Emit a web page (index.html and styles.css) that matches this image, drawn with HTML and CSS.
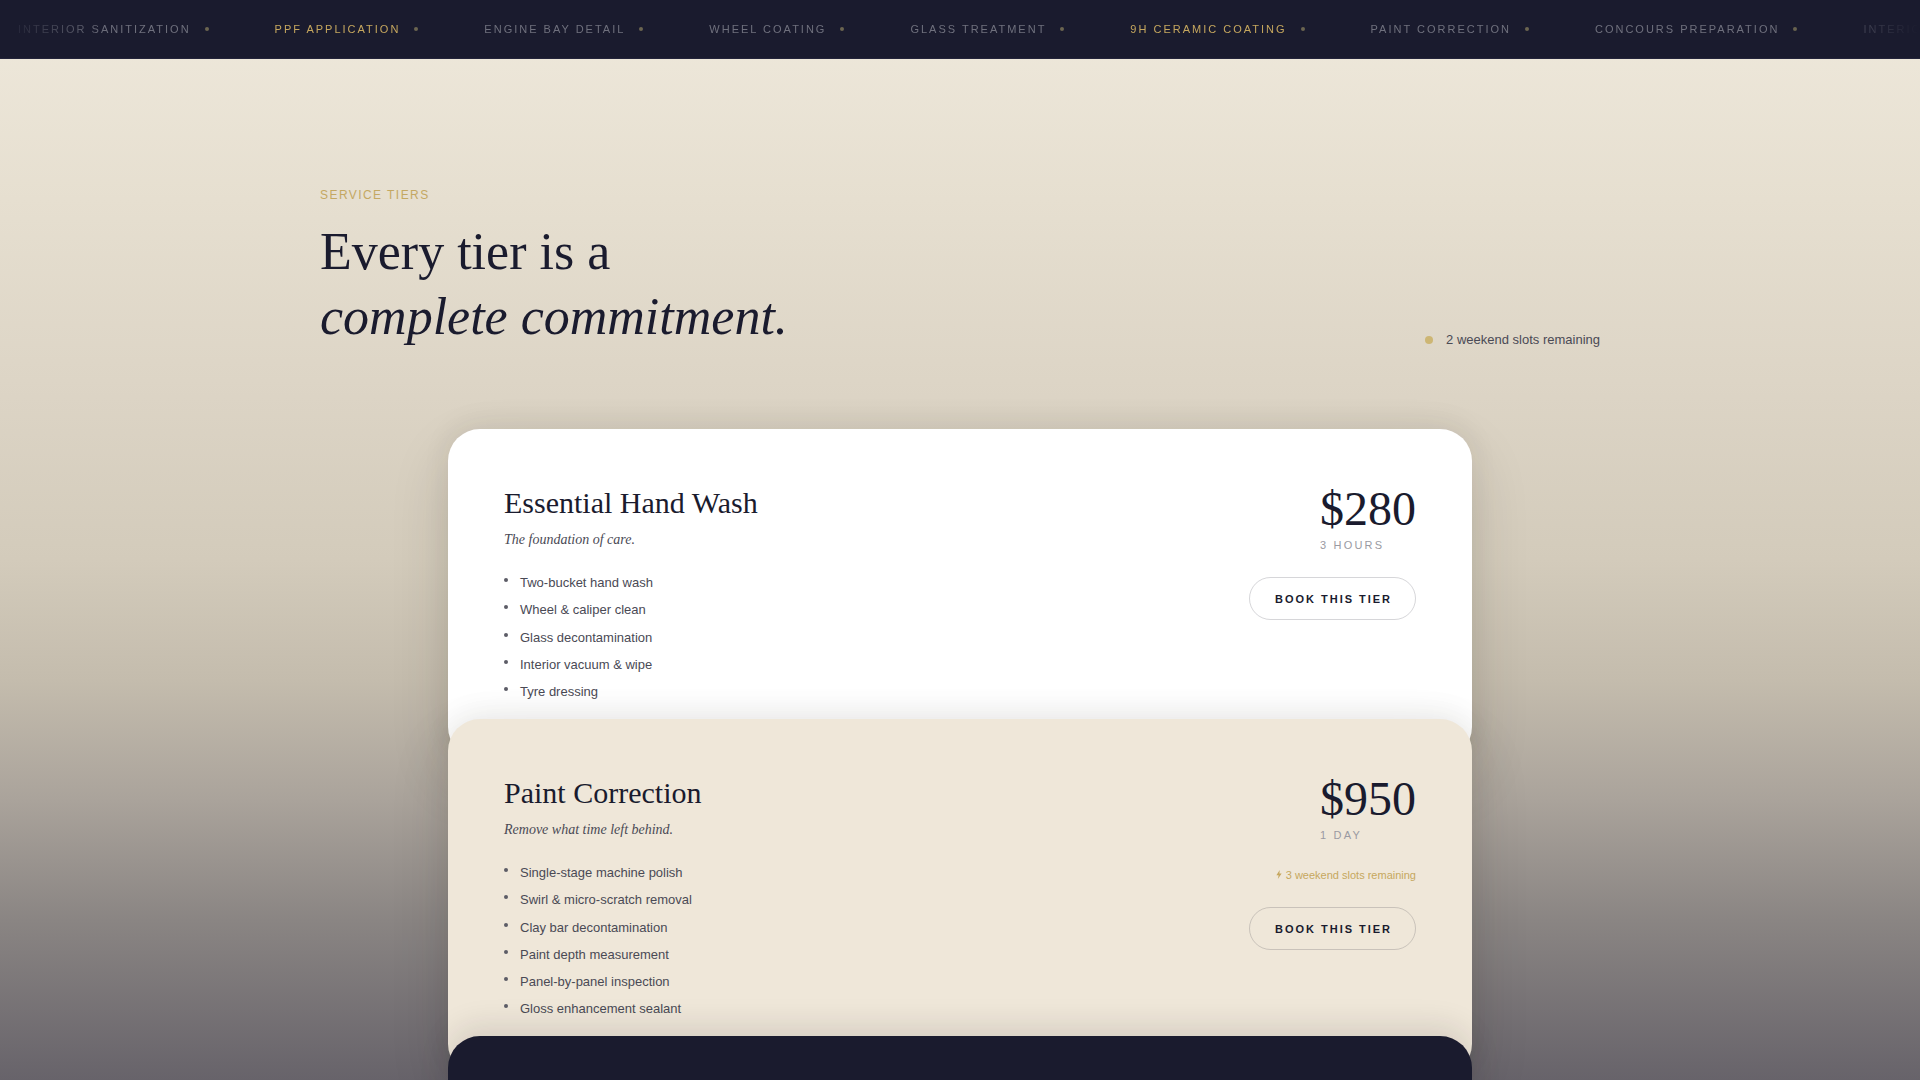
FILE: index.html
```html
<!DOCTYPE html>
<html lang="en">
<head>
<meta charset="utf-8">
<title>Service Tiers</title>
<link rel="stylesheet" href="styles.css">
</head>
<body>
<div class="ticker">
  <div class="ticker-viewport">
    <div class="ticker-track">
      <span class="tick">INTERIOR SANITIZATION</span><span class="tick-dot"></span>
      <span class="tick gold">PPF APPLICATION</span><span class="tick-dot"></span>
      <span class="tick">ENGINE BAY DETAIL</span><span class="tick-dot"></span>
      <span class="tick">WHEEL COATING</span><span class="tick-dot"></span>
      <span class="tick">GLASS TREATMENT</span><span class="tick-dot"></span>
      <span class="tick gold">9H CERAMIC COATING</span><span class="tick-dot"></span>
      <span class="tick">PAINT CORRECTION</span><span class="tick-dot"></span>
      <span class="tick">CONCOURS PREPARATION</span><span class="tick-dot"></span>
      <span class="tick">INTERIOR SANITIZATION</span>
    </div>
  </div>
</div>

<main class="tiers">
  <div class="tiers-head">
    <div class="head-left">
      <div class="eyebrow">SERVICE TIERS</div>
      <h1 class="headline">Every tier is a<br><em>complete commitment.</em></h1>
    </div>
    <div class="slots-badge"><span class="badge-dot"></span>2 weekend slots remaining</div>
  </div>

  <div class="cards">
    <section class="card card-white">
      <div class="card-left">
        <h2 class="card-title">Essential Hand Wash</h2>
        <p class="card-tag">The foundation of care.</p>
        <ul class="features">
          <li>Two-bucket hand wash</li>
          <li>Wheel &amp; caliper clean</li>
          <li>Glass decontamination</li>
          <li>Interior vacuum &amp; wipe</li>
          <li>Tyre dressing</li>
        </ul>
      </div>
      <div class="card-right">
        <div class="price-block">
          <div class="price">$280</div>
          <div class="duration">3 HOURS</div>
        </div>
        <button class="book-btn">BOOK THIS TIER</button>
      </div>
    </section>

    <section class="card card-cream">
      <div class="card-left">
        <h2 class="card-title">Paint Correction</h2>
        <p class="card-tag">Remove what time left behind.</p>
        <ul class="features">
          <li>Single-stage machine polish</li>
          <li>Swirl &amp; micro-scratch removal</li>
          <li>Clay bar decontamination</li>
          <li>Paint depth measurement</li>
          <li>Panel-by-panel inspection</li>
          <li>Gloss enhancement sealant</li>
        </ul>
      </div>
      <div class="card-right">
        <div class="price-block">
          <div class="price">$950</div>
          <div class="duration">1 DAY</div>
        </div>
        <div class="card-slots"><svg class="bolt" viewBox="0 0 8 12" width="6" height="9"><path d="M5 0 L0.5 7 H3.5 L2.5 12 L7.5 4.5 H4.5 Z" fill="#c6a75e"/></svg>3 weekend slots remaining</div>
        <button class="book-btn">BOOK THIS TIER</button>
      </div>
    </section>

    <section class="card card-dark"></section>
  </div>
</main>
</body>
</html>
```

FILE: styles.css
```css
* { box-sizing: border-box; }

html, body {
  margin: 0;
  padding: 0;
}

body {
  height: 100vh;
  overflow: hidden;
  font-family: "Liberation Sans", Arial, sans-serif;
  color: #1a1b2e;
  background: linear-gradient(180deg,
    #efe9dc 0px,
    #e6dfd0 200px,
    #ddd5c6 380px,
    #d3cbbb 560px,
    #c4bcad 680px,
    #aaa39b 800px,
    #8a8583 920px,
    #67636a 1080px);
}

/* ticker */
.ticker {
  height: 59px;
  background: #1a1b2e;
  border-bottom: 1px solid #23243a;
  overflow: hidden;
}

.ticker-viewport {
  height: 100%;
  display: flex;
  align-items: center;
  overflow: hidden;
  -webkit-mask-image: linear-gradient(90deg, transparent 0px, #000 110px, #000 1790px, transparent 1920px);
  mask-image: linear-gradient(90deg, transparent 0px, #000 110px, #000 1790px, transparent 1920px);
}

.ticker-track {
  display: flex;
  align-items: center;
  white-space: nowrap;
  padding-left: 18px;
}

.tick {
  font-size: 11px;
  letter-spacing: 2px;
  color: #6f707d;
  font-weight: 400;
}

.tick.gold {
  color: #c6a75e;
}

.tick-dot {
  width: 4px;
  height: 4px;
  border-radius: 50%;
  background: #6b6550;
  margin: 0 66px 0 14px;
  flex: none;
}

/* section */
.tiers {
  width: 1280px;
  margin: 0 auto;
  padding-top: 128px;
}

.tiers-head {
  display: flex;
  justify-content: space-between;
  align-items: flex-end;
}

.eyebrow {
  font-size: 12px;
  line-height: 16px;
  letter-spacing: 0.12em;
  color: #c4a862;
  margin-bottom: 16px;
}

.headline {
  margin: 0;
  font-family: "Liberation Serif", "Times New Roman", serif;
  font-weight: 400;
  font-size: 52px;
  line-height: 65px;
  color: #1a1b2e;
}

.headline em {
  font-style: italic;
}

.slots-badge {
  display: flex;
  align-items: center;
  gap: 13px;
  font-size: 13px;
  line-height: 20px;
  color: #4a4a55;
  margin-bottom: -1px;
}

.badge-dot {
  width: 8px;
  height: 8px;
  border-radius: 50%;
  background: #cdb674;
}

/* cards */
.cards {
  width: 1024px;
  margin: 80px auto 0;
  display: flex;
  flex-direction: column;
}

.card {
  border-radius: 32px;
  padding: 56px;
  display: flex;
  justify-content: space-between;
  align-items: flex-start;
  box-shadow: 0 -6px 28px rgba(40, 36, 30, 0.07), 0 24px 60px rgba(40, 36, 30, 0.14);
}

.card-white { background: #ffffff; }
.card-cream { background: #efe7d9; margin-top: -40px; }
.card-dark { background: #1a1b2e; min-height: 300px; margin-top: -40.5px; box-shadow: 0 -10px 30px rgba(30, 28, 30, 0.12); }

.card-title {
  margin: 0;
  font-family: "Liberation Serif", "Times New Roman", serif;
  font-weight: 400;
  font-size: 30px;
  line-height: 36px;
  color: #1a1b2e;
}

.card-tag {
  margin: 9px 0 0;
  font-family: "Liberation Serif", "Times New Roman", serif;
  font-style: italic;
  font-size: 14px;
  line-height: 20px;
  color: #4a4a55;
}

.features {
  list-style: none;
  margin: 23px 0 0;
  padding: 0;
  display: flex;
  flex-direction: column;
  gap: 6.5px;
}

.features li {
  display: flex;
  align-items: flex-start;
  gap: 12px;
  font-size: 13px;
  line-height: 20.8px;
  color: #4a4a55;
}

.features li::before {
  content: "";
  flex: none;
  width: 4px;
  height: 4px;
  border-radius: 50%;
  background: #5c5c66;
  margin-top: 5px;
}

.card-right {
  display: flex;
  flex-direction: column;
  align-items: flex-end;
  gap: 24px;
}

.price-block {
  text-align: left;
}

.price {
  font-family: "Liberation Serif", "Times New Roman", serif;
  font-size: 48px;
  line-height: 48px;
  color: #1a1b2e;
}

.duration {
  margin-top: 4px;
  font-size: 11px;
  line-height: 16px;
  letter-spacing: 0.2em;
  color: #9a9aa2;
}

.card-slots {
  display: flex;
  align-items: center;
  gap: 4px;
  font-size: 11px;
  line-height: 16px;
  color: #c6a75e;
}

.bolt { flex: none; }

.book-btn {
  font-family: "Liberation Sans", Arial, sans-serif;
  font-size: 11px;
  font-weight: 700;
  line-height: 12px;
  letter-spacing: 0.18em;
  color: #1a1b2e;
  background: transparent;
  border: 1px solid rgba(26, 27, 46, 0.18);
  border-radius: 999px;
  padding: 15px 23px 14px 25px;
  cursor: pointer;
}
```
